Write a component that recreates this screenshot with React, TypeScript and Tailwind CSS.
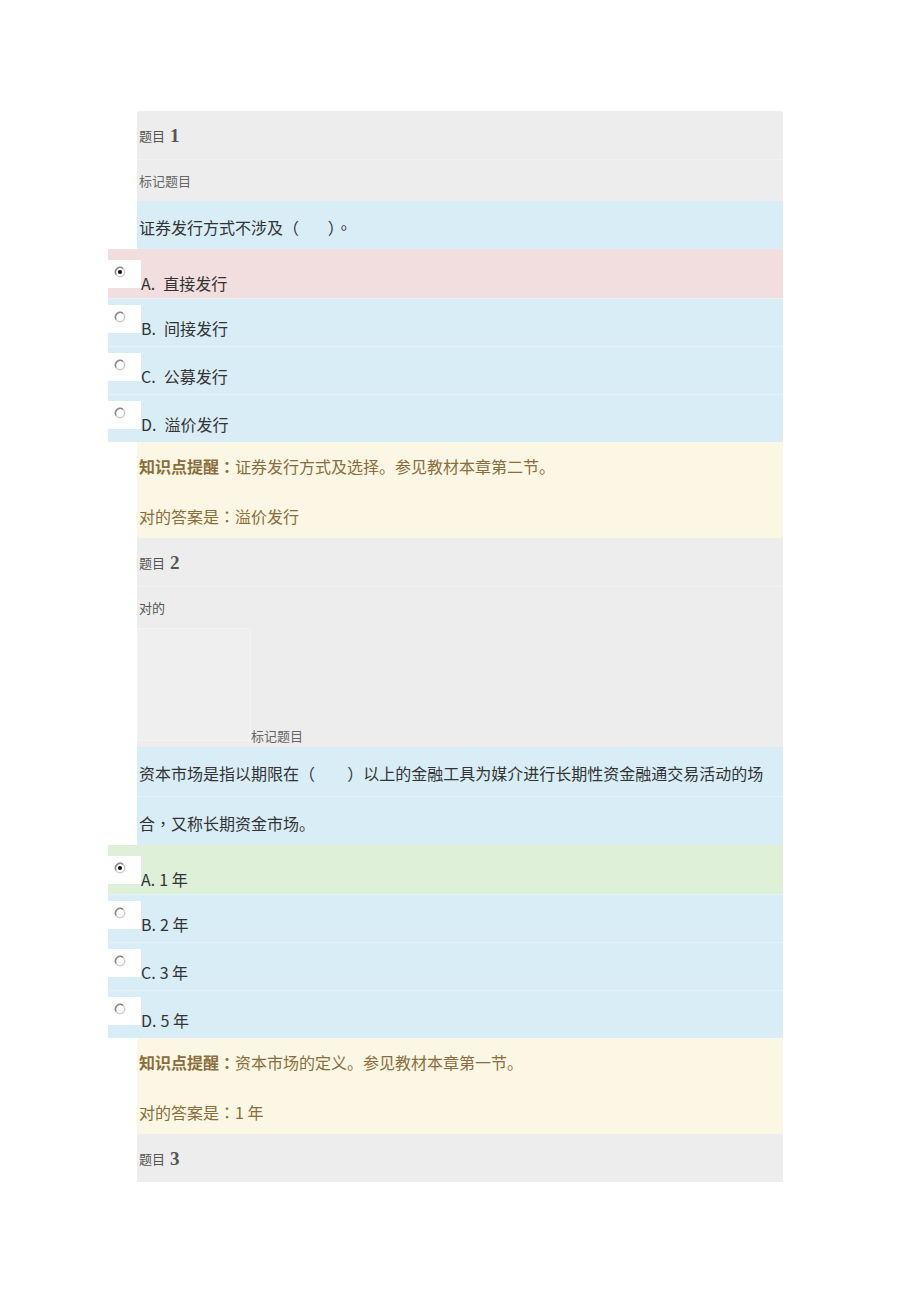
import React from "react";

const CJK = { fontFamily: '"Noto Sans CJK SC", "Noto Sans", sans-serif' };
const TC = { fontFamily: '"Noto Sans CJK TC", "Noto Sans CJK SC", sans-serif' };
const SERIF = { fontFamily: '"Liberation Serif", "Times New Roman", serif' };

function Radio({ checked }: { checked?: boolean }) {
  return (
    <svg width="14" height="14" viewBox="0 0 14 14" className="block">
      <circle cx="7" cy="7" r="4.7" fill="#ffffff" stroke="#cacaca" strokeWidth="1.4" />
      <path d="M3 9.3 A4.7 4.7 0 0 1 9.9 3.3" fill="none" stroke="#8a8a8a" strokeWidth="1.5" />
      {checked && <circle cx="7" cy="7" r="2.1" fill="#111111" />}
    </svg>
  );
}

function HeaderRow({ n }: { n: number }) {
  return (
    <div className="ml-[29px] h-[48px] bg-[#ededed] flex items-center pl-[2px]">
      <span className="text-[13px] text-[#555555] leading-none" style={CJK}>
        题目
      </span>
      <span className="ml-[5px] text-[19px] font-bold text-[#555555] leading-none" style={SERIF}>
        {n}
      </span>
    </div>
  );
}

function Option({
  label,
  text,
  checked,
  bg,
  first,
  gap,
}: {
  label: string;
  text: string;
  checked?: boolean;
  bg: string;
  first?: boolean;
  gap: string;
}) {
  return (
    <div
      className={`flex items-start ${bg} ${first ? "h-[49px] pt-[11px]" : "h-[48px] pt-[6px] border-t border-[#e4f2f9]"}`}
    >
      <div className="w-[33px] h-[28px] bg-white pl-[5px] pt-[5px]">
        <Radio checked={checked} />
      </div>
      <div className="mt-[15px] flex items-center text-[16px] leading-none text-[#333333]" style={CJK}>
        <span>{label}</span>
        <span className={gap}>{text}</span>
      </div>
    </div>
  );
}

function Feedback({ tip, answerPrefix, answer }: { tip: string; answerPrefix: string; answer: string }) {
  return (
    <div className="ml-[29px] bg-[#fcf7e4] text-[16px] text-[#8a6d3b]" style={CJK}>
      <div className="h-[48px] flex items-center pl-[2px] leading-none">
        <span className="font-bold">
          知识点提醒<span style={TC}>：</span>
        </span>
        <span>{tip}</span>
      </div>
      <div className="h-[48px] flex items-center pl-[2px] pt-[4px] leading-none">
        {answerPrefix}
        <span style={TC}>：</span>
        {answer}
      </div>
    </div>
  );
}

export default function App() {
  return (
    <div className="w-[920px] min-h-[1302px] bg-white pt-[111px] pl-[108px]">
      <div className="w-[675px]">
        {/* Question 1 */}
        <HeaderRow n={1} />
        <div className="ml-[29px] h-[42px] bg-[#ededed] border-t border-[#f2f2f2] flex items-center pl-[2px]">
          <span className="text-[13px] text-[#666666] leading-none" style={CJK}>
            标记题目
          </span>
        </div>
        <div className="ml-[29px] h-[48px] bg-[#d9edf7] flex items-center pl-[2px] pt-[4px]">
          <span className="text-[16px] text-[#333333] leading-none whitespace-pre" style={CJK}>
            证券发行方式不涉及（        ）<span style={TC}>。</span>
          </span>
        </div>
        <Option first label="A." text="直接发行" checked bg="bg-[#f2dede]" gap="ml-[8px]" />
        <Option label="B." text="间接发行" bg="bg-[#d9edf7]" gap="ml-[8px]" />
        <Option label="C." text="公募发行" bg="bg-[#d9edf7]" gap="ml-[8px]" />
        <Option label="D." text="溢价发行" bg="bg-[#d9edf7]" gap="ml-[8px]" />
        <Feedback tip="证券发行方式及选择。参见教材本章第二节。" answerPrefix="对的答案是" answer="溢价发行" />

        {/* Question 2 */}
        <HeaderRow n={2} />
        <div className="ml-[29px] h-[42px] bg-[#ededed] border-t border-[#f2f2f2] flex items-center pl-[2px]">
          <span className="text-[13px] text-[#555555] leading-none" style={CJK}>
            对的
          </span>
        </div>
        <div className="ml-[29px] h-[119px] bg-[#ededed] flex items-start">
          <div className="w-[114px] h-[113px] bg-[#efefef] border border-[#f3f3f3]" />
          <span className="mt-[101px] text-[13px] text-[#666666] leading-none" style={CJK}>
            标记题目
          </span>
        </div>
        <div className="ml-[29px] bg-[#d9edf7] text-[16px] text-[#333333]" style={CJK}>
          <div className="h-[49px] flex items-center pl-[2px] pt-[3px] leading-none whitespace-pre">
            资本市场是指以期限在（         ）以上的金融工具为媒介进行长期性资金融通交易活动的场
          </div>
          <div className="h-[49px] flex items-center pl-[2px] pt-[3px] leading-none border-t border-[#e2f1f9]">
            合<span style={TC}>，</span>又称长期资金市场。
          </div>
        </div>
        <Option first label="A." text="1 年" checked bg="bg-[#dff0d8]" gap="ml-[4px]" />
        <Option label="B." text="2 年" bg="bg-[#d9edf7]" gap="ml-[4px]" />
        <Option label="C." text="3 年" bg="bg-[#d9edf7]" gap="ml-[4px]" />
        <Option label="D." text="5 年" bg="bg-[#d9edf7]" gap="ml-[4px]" />
        <Feedback tip="资本市场的定义。参见教材本章第一节。" answerPrefix="对的答案是" answer="1 年" />

        {/* Question 3 */}
        <HeaderRow n={3} />
      </div>
    </div>
  );
}
